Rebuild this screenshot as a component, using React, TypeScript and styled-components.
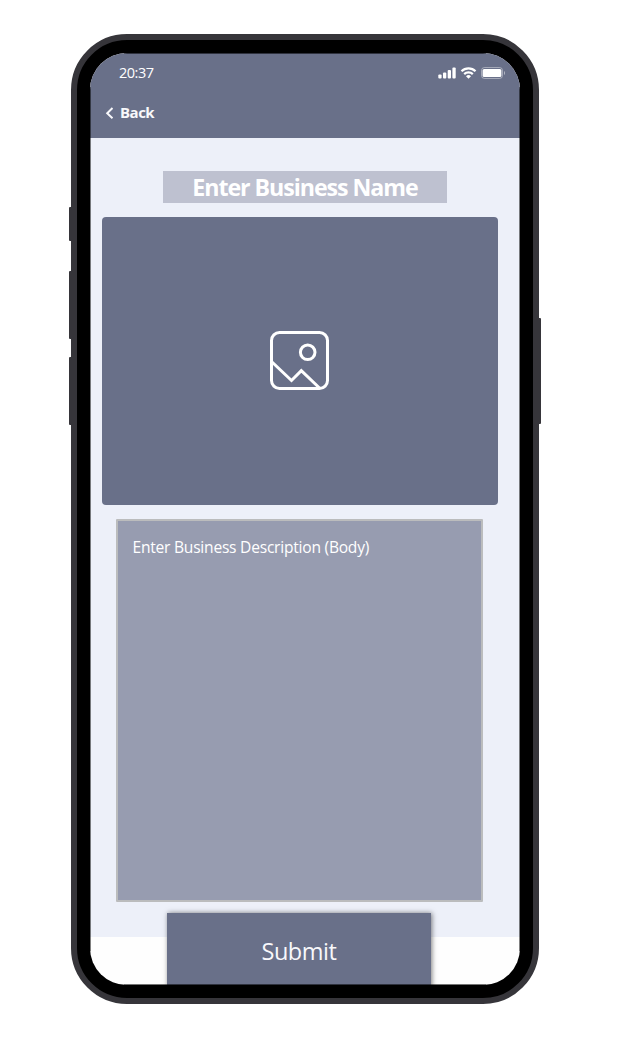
import React from 'react';
import styled, { createGlobalStyle } from 'styled-components';

const slate = '#697089';

const GlobalStyle = createGlobalStyle`
  * { box-sizing: border-box; }
  body {
    margin: 0;
    background: #fff;
    font-family: 'Open Sans', 'Noto Sans', sans-serif;
    color: #fff;
  }
`;

const Stage = styled.main`
  width: 630px;
  height: 1040px;
  padding: 34px 0 0 71px;
  overflow: hidden;
`;

const Phone = styled.div`
  position: relative;
  width: 468px;
  height: 970px;
  padding: 13px;
  border: 6px solid #36353a;
  border-radius: 56px;
  background: #000;
`;

const SideKey = styled.span<{ $side: 'left' | 'right'; $top: number; $length: number }>`
  position: absolute;
  ${({ $side }) => $side}: -8px;
  top: ${({ $top }) => $top}px;
  width: 3px;
  height: ${({ $length }) => $length}px;
  background: #36353a;
  border-radius: ${({ $side }) => ($side === 'left' ? '1px 0 0 1px' : '0 1px 1px 0')};
`;

const Screen = styled.div`
  position: relative;
  width: 430px;
  height: 932px;
  border-radius: 37px;
  overflow: hidden;
  background: #fefefe;

  &::before,
  &::after {
    content: '';
    position: absolute;
    z-index: 1;
    pointer-events: none;
  }

  &::before {
    inset: 0 34px;
    border: solid rgba(0, 0, 0, 0.55);
    border-width: 1px 0;
  }

  &::after {
    inset: 34px 0;
    border: solid rgba(0, 0, 0, 0.5);
    border-width: 0 1px;
  }
`;

const Header = styled.header`
  height: 85px;
  background: ${slate};
`;

const StatusBar = styled.div`
  display: flex;
  justify-content: space-between;
  align-items: center;
  height: 39px;
  padding: 0 14px 0 29px;
`;

const Clock = styled.span`
  font-size: 14.5px;
  line-height: 20px;
  letter-spacing: -0.5px;
`;

const StatusIcons = styled.div`
  display: flex;
  align-items: center;
  gap: 4px;
`;

const BackButton = styled.button`
  display: flex;
  align-items: center;
  gap: 6px;
  height: 40px;
  padding: 0 0 0 15px;
  border: 0;
  background: none;
  color: #f8f8fb;
  font: 700 15px/20px 'Open Sans', sans-serif;
  letter-spacing: -0.5px;

  svg {
    position: relative;
    top: 1px;
  }
`;

const Content = styled.section`
  display: flex;
  flex-direction: column;
  align-items: center;
  height: 799px;
  padding: 33px 10px 0 0;
  background: #edf0f9;
`;

const NameField = styled.div`
  width: 284px;
  height: 32px;
  margin-left: 10px;
  background: #bec1d0;
  text-align: center;
  font-size: 23.2px;
  font-weight: 700;
  line-height: 32px;
  letter-spacing: -1.05px;
  white-space: nowrap;
`;

const ImagePicker = styled.div`
  display: flex;
  justify-content: center;
  align-items: center;
  width: 396px;
  height: 288px;
  margin: 14px 0;
  padding: 0 1px 1px 0;
  background: ${slate};
  border-radius: 4px;
`;

const DescriptionField = styled.div`
  width: 367px;
  height: 383px;
  margin-right: 2px;
  padding: 16px 15px;
  border: 2px solid #bbbcbd;
  border-radius: 1px;
  background: #979cb0;
  font-size: 15.6px;
  line-height: 20px;
  letter-spacing: -0.24px;
  white-space: nowrap;
`;

const SubmitButton = styled.button`
  position: relative;
  display: block;
  width: 264px;
  height: 76px;
  margin: -24px 0 0 77px;
  padding: 0;
  border: 0;
  background: ${slate};
  box-shadow: 1px 0 5px rgba(0, 0, 0, 0.5);
  color: #f8f8fb;
  font: 400 23.5px/75px 'Open Sans', sans-serif;
  letter-spacing: -0.45px;
`;

const SignalIcon = () => (
  <svg width="18" height="12" viewBox="0 0 18 12" fill="#fff">
    <rect x="0.3" y="7.5" width="3.3" height="4" rx="1" />
    <rect x="5" y="5.4" width="3.3" height="6.1" rx="1" />
    <rect x="9.7" y="3" width="3.3" height="8.5" rx="1" />
    <rect x="14.4" y="0.6" width="3.3" height="10.9" rx="1" />
  </svg>
);

const WifiIcon = () => (
  <svg width="17" height="12" viewBox="0 0 16 12" fill="none" stroke="#fff" strokeWidth="2.2">
    <path d="M1 4.3a10 10 0 0 1 14 0M3.7 7.1a6.2 6.2 0 0 1 8.6 0" />
    <path d="M5.5 9.2a3.7 3.7 0 0 1 5 0L8 11.7Z" fill="#fff" stroke="none" />
  </svg>
);

const BatteryIcon = () => (
  <svg width="25" height="12" viewBox="0 0 25 12">
    <rect x="0.5" y="0.5" width="21" height="11" rx="3" fill="none" stroke="#fff" strokeOpacity="0.4" />
    <rect x="1.6" y="2" width="18.8" height="8" rx="1.5" fill="#fff" />
    <path d="M23 4v4c1.4-.6 1.4-3.4 0-4Z" fill="#fff" opacity="0.5" />
  </svg>
);

const ChevronIcon = () => (
  <svg width="9" height="12" viewBox="0 0 9 12" fill="none" stroke="#f8f8fb" strokeWidth="2">
    <path d="M7.5 1 2.2 6.2l5.3 5" />
  </svg>
);

const PictureIcon = () => (
  <svg width="59" height="59" viewBox="0 0 59 59" fill="none" stroke="#fff" strokeWidth="3">
    <rect x="1.5" y="1.5" width="56" height="56" rx="8" />
    <circle cx="37.7" cy="21.3" r="7.3" />
    <path d="M2 31 21.5 49.5 31.3 39.7 50 57.5" />
  </svg>
);

export default function App() {
  return (
    <>
      <GlobalStyle />
      <Stage>
        <Phone>
          <SideKey $side="left" $top={167} $length={34} />
          <SideKey $side="left" $top={231} $length={68} />
          <SideKey $side="left" $top={317} $length={68} />
          <SideKey $side="right" $top={278} $length={106} />
          <Screen>
            <Header>
              <StatusBar>
                <Clock>20:37</Clock>
                <StatusIcons>
                  <SignalIcon />
                  <WifiIcon />
                  <BatteryIcon />
                </StatusIcons>
              </StatusBar>
              <BackButton>
                <ChevronIcon />
                Back
              </BackButton>
            </Header>
            <Content>
              <NameField>Enter Business Name</NameField>
              <ImagePicker>
                <PictureIcon />
              </ImagePicker>
              <DescriptionField>Enter Business Description (Body)</DescriptionField>
            </Content>
            <SubmitButton>Submit</SubmitButton>
          </Screen>
        </Phone>
      </Stage>
    </>
  );
}
